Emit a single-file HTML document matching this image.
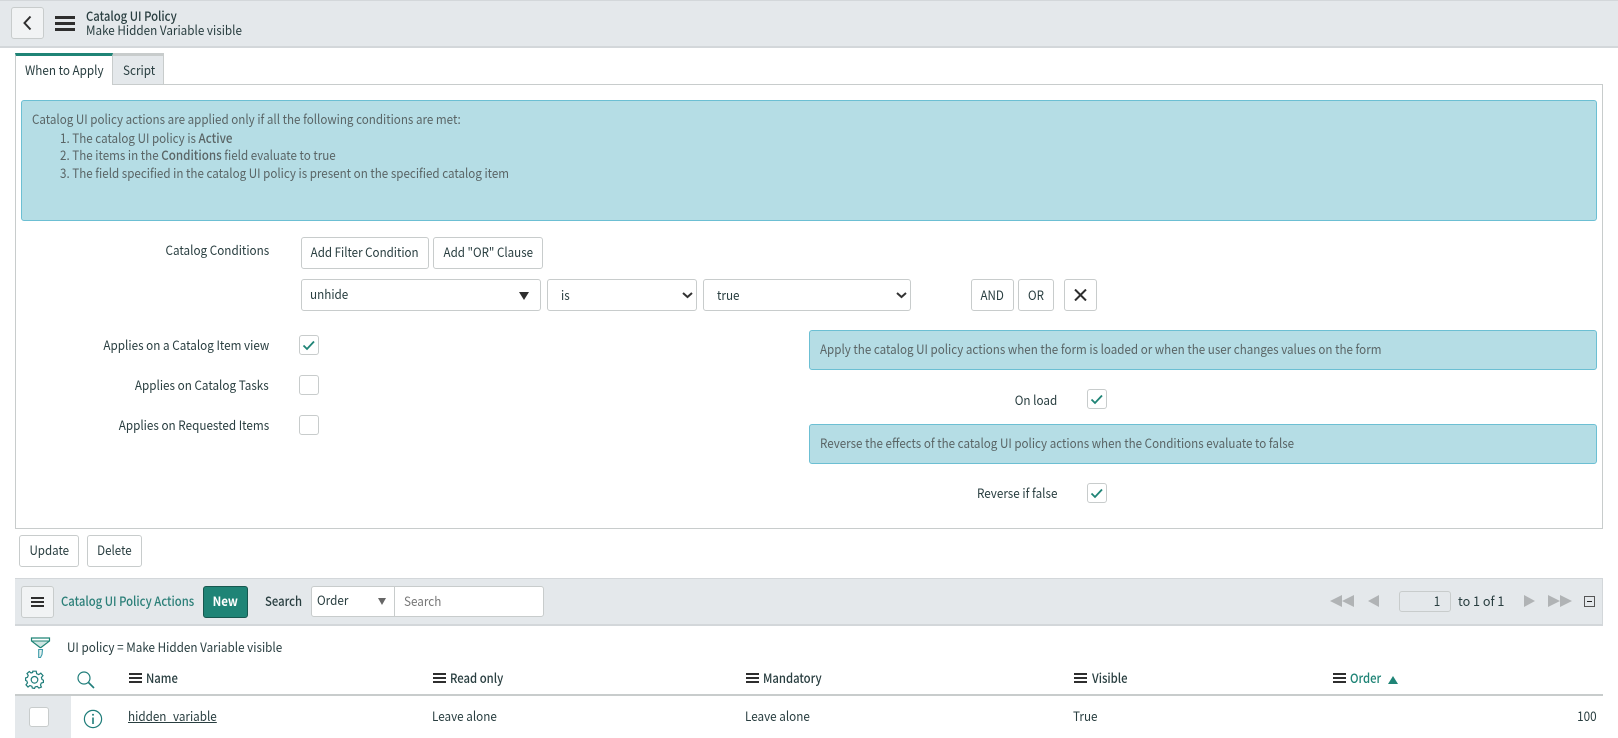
<!DOCTYPE html>
<html><head><meta charset="utf-8">
<style>
html,body{margin:0;padding:0;background:#fff;overflow:hidden}
#p{position:relative;width:1618px;height:738px;overflow:hidden;background:#fff;font-family:"Noto Sans CJK JP","Liberation Sans",sans-serif;font-size:13px;color:#293e40}
#p div,#p svg{position:absolute;box-sizing:border-box}
.t{white-space:nowrap;line-height:20px;height:20px;transform:scaleX(.9);transform-origin:left center}
.r{text-align:right;transform-origin:right center}
.m{font-weight:500;transform:scaleX(.87)}
.btn{background:#fff;border:1px solid #c8cccc;border-radius:3px;text-align:center;line-height:29px;white-space:nowrap}
.btn span{display:inline-block;transform:scaleX(.89)}
.up{line-height:27px}
.info{background:#b5dde5;border:1px solid #6cbfd3;border-radius:3px;color:#5f6b6c}
.cb{width:20px;height:20px;background:#fff;border:1px solid #c8cccc;border-radius:3px}
.g{color:#5a6566;transform:scaleX(.893)}
.sel{background:#fff;border:1px solid #c8cccc;border-radius:3px}
.bar{height:2px;background:#2e2e2e}
b{font-weight:500}
</style></head><body>
<div id="p">
<!-- header -->
<div style="left:0;top:0;width:1618px;height:48px;background:#e4e8eb;border:1px solid #d3d7da;border-width:1px 0 2px 0"></div>
<div style="left:11px;top:7px;width:33px;height:32px;background:#f1f3f4;border:1px solid #c8cccc;border-radius:3px"></div>
<svg style="left:11px;top:7px" width="33" height="32"><path d="M19.5 9.5 L13.5 16 L19.5 22.5" fill="none" stroke="#2e2e2e" stroke-width="2"/></svg>
<div style="left:55px;top:16px;width:20px;height:3px;background:#2e2e2e"></div>
<div style="left:55px;top:22px;width:20px;height:3px;background:#2e2e2e"></div>
<div style="left:55px;top:28px;width:20px;height:3px;background:#2e2e2e"></div>
<div class="t m" style="left:86px;top:6px">Catalog UI Policy</div>
<div class="t" style="left:86px;top:20px">Make Hidden Variable visible</div>

<!-- panel -->
<div style="left:15px;top:84px;width:1588px;height:445px;border:1px solid #c8cccc;background:#fff"></div>
<div style="left:15px;top:53px;width:98px;height:32px;background:#fff;border:1px solid #c8cccc;border-top:3px solid #1f8476;border-bottom:0"></div>
<div style="left:113px;top:53px;width:51px;height:32px;background:#e4e8eb;border:1px solid #c8cccc;border-top:3px solid #c8cccc;border-left:0"></div>
<div class="t" style="left:25px;top:60px">When to Apply</div>
<div class="t" style="left:123px;top:60px">Script</div>

<div class="info" style="left:21px;top:100px;width:1576px;height:121px"></div>
<div class="t g" style="left:32px;top:109px">Catalog UI policy actions are applied only if all the following conditions are met:</div>
<div class="t g" style="left:60px;top:128px">1. The catalog UI policy is <b>Active</b></div>
<div class="t g" style="left:60px;top:145px">2. The items in the <b>Conditions</b> field evaluate to true</div>
<div class="t g" style="left:60px;top:163px">3. The field specified in the catalog UI policy is present on the specified catalog item</div>

<div class="t r" style="right:1349px;top:240px">Catalog Conditions</div>
<div class="btn up" style="left:301px;top:237px;width:128px;height:32px"><span>Add Filter Condition</span></div>
<div class="btn up" style="left:433px;top:237px;width:110px;height:32px"><span>Add "OR" Clause</span></div>

<div class="sel" style="left:301px;top:279px;width:240px;height:32px"></div>
<div class="t" style="left:310px;top:284px">unhide</div>
<svg style="left:519px;top:292px" width="10" height="8"><path d="M0 0H10L5 8Z" fill="#2e2e2e"/></svg>
<div class="sel" style="left:547px;top:279px;width:150px;height:32px"></div>
<div class="t" style="left:561px;top:285px">is</div>
<svg style="left:682px;top:292px" width="11" height="7"><path d="M1 1L5.5 5L10 1" fill="none" stroke="#333" stroke-width="2"/></svg>
<div class="sel" style="left:703px;top:279px;width:208px;height:32px"></div>
<div class="t" style="left:717px;top:285px">true</div>
<svg style="left:896px;top:292px" width="11" height="7"><path d="M1 1L5.5 5L10 1" fill="none" stroke="#333" stroke-width="2"/></svg>
<div class="btn" style="left:971px;top:279px;width:43px;height:32px"><span>AND</span></div>
<div class="btn" style="left:1018px;top:279px;width:36px;height:32px"><span>OR</span></div>
<div class="btn" style="left:1064px;top:279px;width:33px;height:32px"></div>
<svg style="left:1074px;top:289px" width="13" height="12"><path d="M1 0.5L12 11.5M12 0.5L1 11.5" stroke="#2e2e2e" stroke-width="2" fill="none"/></svg>

<div class="t r" style="right:1349px;top:335px">Applies on a Catalog Item view</div>
<div class="cb" style="left:299px;top:335px"></div>
<svg style="left:299px;top:335px" width="20" height="20"><path d="M4.5 10.5L8 14L15 6.5" fill="none" stroke="#1f8476" stroke-width="1.8"/></svg>
<div class="t r" style="right:1349px;top:375px">Applies on Catalog Tasks</div>
<div class="cb" style="left:299px;top:375px"></div>
<div class="t r" style="right:1349px;top:415px">Applies on Requested Items</div>
<div class="cb" style="left:299px;top:415px"></div>

<div class="info" style="left:809px;top:330px;width:788px;height:40px"></div>
<div class="t g" style="left:820px;top:339px">Apply the catalog UI policy actions when the form is loaded or when the user changes values on the form</div>
<div class="t r" style="right:561px;top:390px">On load</div>
<div class="cb" style="left:1087px;top:389px"></div>
<svg style="left:1087px;top:389px" width="20" height="20"><path d="M4.5 10.5L8 14L15 6.5" fill="none" stroke="#1f8476" stroke-width="1.8"/></svg>
<div class="info" style="left:809px;top:424px;width:788px;height:40px"></div>
<div class="t g" style="left:820px;top:433px">Reverse the effects of the catalog UI policy actions when the Conditions evaluate to false</div>
<div class="t r" style="right:561px;top:483px">Reverse if false</div>
<div class="cb" style="left:1087px;top:483px"></div>
<svg style="left:1087px;top:483px" width="20" height="20"><path d="M4.5 10.5L8 14L15 6.5" fill="none" stroke="#1f8476" stroke-width="1.8"/></svg>

<div class="btn up" style="left:19px;top:535px;width:60px;height:32px"><span>Update</span></div>
<div class="btn up" style="left:87px;top:535px;width:55px;height:32px"><span>Delete</span></div>

<!-- list bar -->
<div style="left:15px;top:578px;width:1588px;height:48px;background:#e4e8eb;border:1px solid #d3d7da;border-width:1px 1px 2px 0"></div>
<div style="left:21px;top:586px;width:33px;height:32px;background:#f1f3f4;border:1px solid #c8cccc;border-radius:3px"></div>
<div class="bar" style="left:31px;top:597px;width:13px"></div>
<div class="bar" style="left:31px;top:601px;width:13px"></div>
<div class="bar" style="left:31px;top:605px;width:13px"></div>
<div class="t m" style="left:61px;top:591px;color:#2b7f78">Catalog UI Policy Actions</div>
<div class="btn up" style="left:203px;top:586px;width:45px;height:32px;background:#1f8476;border-color:#17574f;color:#fff;font-weight:700"><span>New</span></div>
<div class="t m" style="left:265px;top:591px">Search</div>
<div class="sel" style="left:311px;top:586px;width:84px;height:31px;border-radius:3px 0 0 3px"></div>
<div class="t" style="left:317px;top:590px">Order</div>
<svg style="left:378px;top:598px" width="8" height="7"><path d="M0 0H8L4 7Z" fill="#666"/></svg>
<div class="sel" style="left:394px;top:586px;width:150px;height:31px;border-radius:0 3px 3px 0"></div>
<div class="t" style="left:404px;top:591px;color:#777">Search</div>

<svg style="left:1330px;top:595px" width="25" height="13"><path d="M12 0V12L0 6ZM24 0V12L12 6Z" fill="#b0b3b5"/></svg>
<svg style="left:1368px;top:595px" width="11" height="13"><path d="M11 0V12L0 6Z" fill="#b0b3b5"/></svg>
<div style="left:1399px;top:591px;width:52px;height:21px;background:#e4e8eb;border:1px solid #c8cccc;border-radius:3px"></div>
<div class="t r" style="right:178px;top:591px">1</div>
<div class="t" style="left:1458px;top:591px;transform:scaleX(.97)">to 1 of 1</div>
<svg style="left:1524px;top:595px" width="11" height="13"><path d="M0 0V12L11 6Z" fill="#b0b3b5"/></svg>
<svg style="left:1548px;top:595px" width="25" height="13"><path d="M0 0V12L12 6ZM12 0V12L24 6Z" fill="#b0b3b5"/></svg>
<div style="left:1584px;top:596px;width:11px;height:11px;border:1px solid #555"></div>
<div style="left:1587px;top:601px;width:5px;height:1px;background:#222"></div>

<!-- filter row -->
<svg style="left:30px;top:637px" width="21" height="22" fill="none"><path d="M3.5 4.5H17.5L10.5 10.5Z" fill="#cfe6e3"/><path d="M1.5 1H19.5V4L11 10.5H10L1.5 4Z" stroke="#1f8476" stroke-width="1.2"/><path d="M1.5 4H19.5" stroke="#1f8476" stroke-width="1"/><path d="M8.7 12.5H12.5L12 17.5L10.5 20.5H8.7Z" stroke="#3a9aa8" stroke-width="1.1" fill="#e6f2f0"/></svg>
<div class="t" style="left:67px;top:637px">UI policy = Make Hidden Variable visible</div>

<!-- gear -->
<svg style="left:25px;top:670px" width="19" height="19" viewBox="0 0 19 19" fill="none" stroke="#1f7d7a" stroke-width="1.2"><path d="M7.8 1.2H11.2L11.7 3.7L13.7 4.6L15.8 3.2L18 5.6L16.4 7.5L17 9.5L18.4 10.2V12.4L16.3 13L15.5 15L16.4 17L13.9 18L12.3 16.4L10.2 16.9L9.5 18.5L7.3 18L6.9 16.3L4.9 15.5L3 17L1 14.8L2.5 12.9L1.8 10.9L0.6 10.4V7.9L2.5 7.3L3.2 5.3L2 3.5L4.3 1.5L6 3L7.6 2.5Z"/><circle cx="9.5" cy="9.8" r="3.3"/></svg>
<svg style="left:77px;top:671px" width="18" height="18" fill="none" stroke="#1f7d7a"><circle cx="7" cy="7" r="6" stroke-width="1.2"/><path d="M11.5 11.5L17 17" stroke-width="1.6"/></svg>

<div class="bar" style="left:129px;top:673px;width:13px"></div><div class="bar" style="left:129px;top:677px;width:13px"></div><div class="bar" style="left:129px;top:681px;width:13px"></div>
<div class="t m" style="left:146px;top:668px">Name</div>
<div class="bar" style="left:433px;top:673px;width:13px"></div><div class="bar" style="left:433px;top:677px;width:13px"></div><div class="bar" style="left:433px;top:681px;width:13px"></div>
<div class="t m" style="left:450px;top:668px">Read only</div>
<div class="bar" style="left:746px;top:673px;width:13px"></div><div class="bar" style="left:746px;top:677px;width:13px"></div><div class="bar" style="left:746px;top:681px;width:13px"></div>
<div class="t m" style="left:763px;top:668px">Mandatory</div>
<div class="bar" style="left:1074px;top:673px;width:13px"></div><div class="bar" style="left:1074px;top:677px;width:13px"></div><div class="bar" style="left:1074px;top:681px;width:13px"></div>
<div class="t m" style="left:1092px;top:668px">Visible</div>
<div class="bar" style="left:1333px;top:673px;width:13px"></div><div class="bar" style="left:1333px;top:677px;width:13px"></div><div class="bar" style="left:1333px;top:681px;width:13px"></div>
<div class="t m" style="left:1350px;top:668px;color:#1f8476">Order</div>
<svg style="left:1388px;top:676px" width="10" height="8"><path d="M0 8H10L5 0Z" fill="#1f8476"/></svg>

<div style="left:15px;top:694px;width:1588px;height:2px;background:#c8cccc"></div>
<div style="left:15px;top:696px;width:56px;height:42px;background:#e4e8eb"></div>
<div class="cb" style="left:29px;top:707px"></div>
<svg style="left:83px;top:709px" width="20" height="20" fill="none"><circle cx="10" cy="10" r="8.6" stroke="#1f7d7a" stroke-width="1.2"/><path d="M10 8.5V15" stroke="#1f7d7a" stroke-width="1.6"/><circle cx="10" cy="5.7" r="1" fill="#1f7d7a"/></svg>
<div class="t" style="left:128px;top:706px;text-decoration:underline">hidden_variable</div>
<div class="t" style="left:432px;top:706px">Leave alone</div>
<div class="t" style="left:745px;top:706px">Leave alone</div>
<div class="t" style="left:1073px;top:706px">True</div>
<div class="t r" style="right:21px;top:706px">100</div>
</div>
</body></html>
